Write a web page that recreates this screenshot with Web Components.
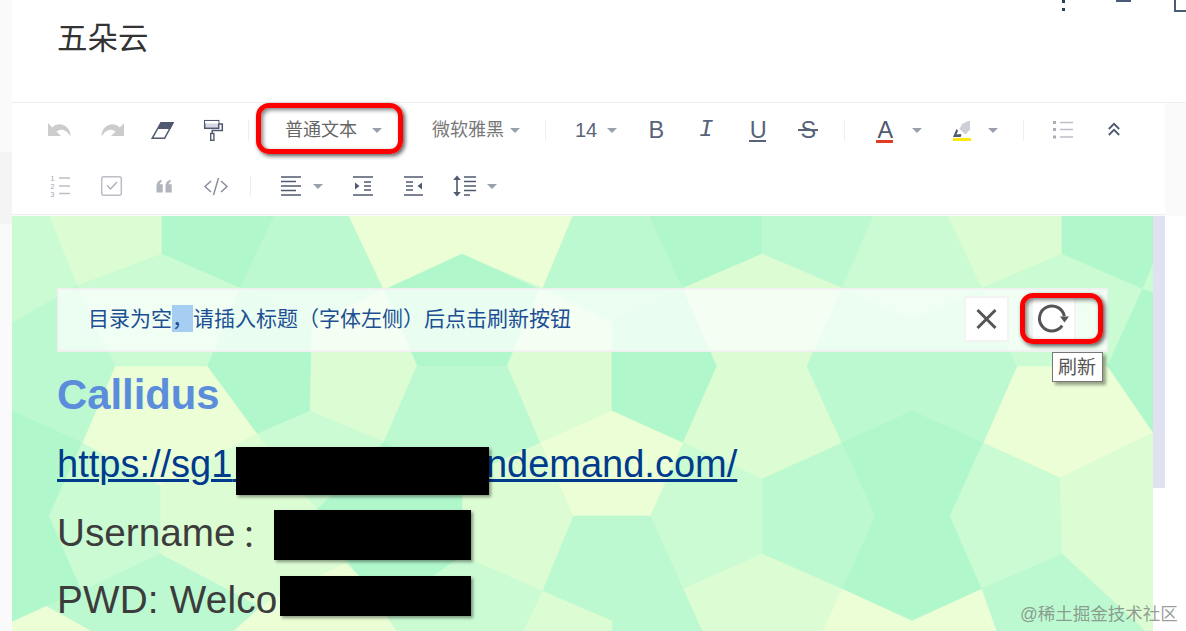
<!DOCTYPE html>
<html lang="zh">
<head>
<meta charset="utf-8">
<title>五朵云</title>
<style>
  html, body { margin: 0; height: 100%; overflow: hidden; background: #fff; }
  body { font-family: "Liberation Sans", "Noto Sans CJK SC", sans-serif; }
  a { color: inherit; text-decoration: inherit; }
</style>
</head>
<body>
<note-page>
  <title-bar>五朵云</title-bar>
  <editor-toolbar>
    <tool-row slot="row1">
      <tb-icon name="undo" w="52"></tb-icon>
      <tb-icon name="redo" w="52"></tb-icon>
      <tb-icon name="eraser" w="50"></tb-icon>
      <tb-icon name="roller" w="50"></tb-icon>
      <tb-sep style="margin-left:10px"></tb-sep>
      <tb-select style="margin-left:36px;--gap:15px;color:#666">普通文本</tb-select>
      <tb-select style="margin-left:50px;--gap:6px;color:#777">微软雅黑</tb-select>
      <tb-sep style="margin-left:25px"></tb-sep>
      <tb-select style="margin-left:29px;--gap:10px;--size:20px;color:#5a6478">14</tb-select>
      <tb-letter style="margin-left:14px">B</tb-letter>
      <tb-letter kind="italic">I</tb-letter>
      <tb-letter kind="under" style="margin-left:2px">U</tb-letter>
      <tb-letter kind="strike">S</tb-letter>
      <tb-sep style="margin-left:11px"></tb-sep>
      <tb-letter kind="color" style="margin-left:25px">A</tb-letter>
      <tb-caret style="margin-left:12px"></tb-caret>
      <tb-icon name="marker" w="30" style="margin-left:25px"></tb-icon>
      <tb-caret style="margin-left:11px"></tb-caret>
      <tb-sep style="margin-left:25px"></tb-sep>
      <tb-icon name="ul" w="30" style="margin-left:24px"></tb-icon>
      <tb-icon name="collapse" w="30" style="margin-left:21px"></tb-icon>
    </tool-row>
    <tool-row slot="row2">
      <tb-icon name="ol" w="52"></tb-icon>
      <tb-icon name="check" w="52"></tb-icon>
      <tb-icon name="quote" w="52"></tb-icon>
      <tb-icon name="code" w="52"></tb-icon>
      <tb-sep style="margin-left:8px"></tb-sep>
      <tb-icon name="alignleft" w="30" style="margin-left:25px"></tb-icon>
      <tb-caret style="margin-left:7px"></tb-caret>
      <tb-icon name="indent" w="30" style="margin-left:25px"></tb-icon>
      <tb-icon name="outdent" w="30" style="margin-left:21px"></tb-icon>
      <tb-icon name="lineheight" w="30" style="margin-left:20px"></tb-icon>
      <tb-caret style="margin-left:8px"></tb-caret>
    </tool-row>
    <annot-box slot="over" style="left:244px;top:0;width:147px;height:51px"></annot-box>
  </editor-toolbar>
  <doc-pane>
    <toc-notice>
      目录为空<span style="display:inline-block;height:27px;line-height:27px;background:#a6cdf2">，</span>请插入标题（字体左侧）后点击刷新按钮
      <notice-btn slot="actions" icon="close"></notice-btn>
      <notice-btn slot="actions" icon="refresh"></notice-btn>
    </toc-notice>
    <doc-heading>Callidus</doc-heading>
    <doc-line style="color:#003a8c;font-size:38px;margin-top:2px"><a href="#" style="text-decoration:underline;text-decoration-thickness:3px;text-underline-offset:2px">https://sg1<span style="letter-spacing:243px">&nbsp;</span>ndemand.com/</a></doc-line>
    <doc-line>Username<span style="font-size:30px;margin-left:6px">：</span></doc-line>
    <doc-line style="letter-spacing:.2px">PWD: Welco</doc-line>
    <redact-box style="left:224px;top:231px;width:253px;height:48px"></redact-box>
    <redact-box style="left:262px;top:294px;width:197px;height:50px"></redact-box>
    <redact-box style="left:268px;top:360px;width:191px;height:40px"></redact-box>
    <annot-box style="left:1008px;top:77px;width:83px;height:51px"></annot-box>
    <tip-box style="left:1040px;top:136px">刷新</tip-box>
  </doc-pane>
  <water-mark>@稀土掘金技术社区</water-mark>
</note-page>

<script>
const DARK = "#50596f";
const ICONS = {
  undo: `<path fill="#ccc" d="M2 7v13h13l-4.5-4.500c2.400-1.800 5-2.200 7.400-1.300 2.600 1 4.600 3 6.600 6 .2-4.500-2.200-9-6.800-11-4-1.700-8.400-.7-11.400 2.200z"/>`,
  redo: `<path fill="#ccc" transform="matrix(-1 0 0 1 28 0)" d="M2 7v13h13l-4.500-4.500c2.400-1.800 5-2.200 7.400-1.300 2.600 1 4.600 3 6.600 6 .2-4.500-2.200-9-6.800-11-4-1.700-8.400-.7-11.400 2.200z"/>`,
  eraser: `<path fill="${DARK}" d="M12 6h13l-3.600 7H8.400z"/><path fill="none" stroke="${DARK}" stroke-width="1.500" d="M12 6.700h12L15.600 22.300H3.200z"/>`,
  roller: `<rect x="5.700" y="4.700" width="14" height="7.600" fill="#d5d9e4" stroke="${DARK}" stroke-width="1.500"/><rect x="6" y="5" width="13.500" height="2.500" fill="#fff"/>
    <path fill="none" stroke="${DARK}" stroke-width="1.500" d="M20 8h3.300v6.500H13.200v3"/><rect x="11.700" y="17.500" width="3.200" height="6.800" fill="#fff" stroke="${DARK}" stroke-width="1.400"/>`,
  marker: `<path fill="#cdd0d6" d="M14 8l6-3h2v8.500l-4.500 5-6-5.500z"/><path fill="${DARK}" d="M5 21l3.500-8 1.500 1.500-1.500 4 4-.5 1 1-1 2z"/><rect x="5" y="22" width="18" height="3" fill="#fbe610"/>`,
  ul: `<g fill="#aaaeb9"><rect x="4" y="5" width="3" height="3"/><rect x="4" y="12" width="3" height="3"/><rect x="4" y="19.500" width="3" height="3"/></g>
    <g stroke="#bcbfc8" stroke-width="1.400"><path d="M11 6.500h13M11 13.500h13M11 21h13"/></g>`,
  collapse: `<path fill="none" stroke="${DARK}" stroke-width="1.800" d="M8.800 13l5.200-5.200 5.200 5.200M8.800 19l5.200-5.200 5.200 5.200"/>`,
  ol: `<g fill="#a0a4ae" font-size="7" font-family="Liberation Sans"><text x="4.500" y="8.500">1</text><text x="4.500" y="16.500">2</text><text x="4.500" y="24.500">3</text></g>
    <path stroke="#bcbfc8" stroke-width="1.300" d="M13 6h11M13 14h11M13 21.500h11"/>`,
  check: `<rect x="3.700" y="4.700" width="19.600" height="18.600" rx="2" fill="none" stroke="#bbbec6" stroke-width="1.500"/><path fill="none" stroke="#a8acb6" stroke-width="1.300" d="M9 13.500l3.500 3.500 6.500-7"/>`,
  quote: `<g fill="#b0b4bd"><path d="M6.500 14c0-3 1.600-5.200 5-6.500v2.400c-1.100.5-1.700 1.200-1.800 2.400h3V20.500H6.500z"/><path d="M15.500 14c0-3 1.600-5.200 5-6.500v2.400c-1.100.5-1.700 1.200-1.800 2.400h3V20.500h-6.200z"/></g>`,
  code: `<path fill="none" stroke="#85899a" stroke-width="1.400" d="M9 9l-6 5.500L9 20M19 9l6 5.500-6 5.500M16.500 6l-5 17"/>`,
  alignleft: `<path stroke="${DARK}" stroke-width="1.600" d="M4 5h20M4 9.500h15M4 14h20M4 18.500h15M4 23h20"/>`,
  indent: `<path stroke="${DARK}" stroke-width="1.600" d="M4 5h20M15 10h7M15 14h7M15 18h7M4 23h20"/><path fill="${DARK}" d="M6 10.500l4.500 3.500L6 17.500z"/>`,
  outdent: `<path stroke="${DARK}" stroke-width="1.600" d="M4 5h19M6 10h7M6 14h7M6 18h7M4 23h19"/><path fill="${DARK}" d="M22 10.500L17.500 14l4.500 3.500z"/>`,
  lineheight: `<path stroke="${DARK}" stroke-width="1.600" d="M7 6v16M14 5h12M14 9.500h12M14 14h12M14 18.500h12M14 23h6"/><path fill="${DARK}" d="M3.200 8L7 3.600 10.800 8zM3.200 20L7 24.400 10.800 20z"/>`,
};

class NotePage extends HTMLElement {
  constructor() {
    super();
    this.attachShadow({ mode: "open" });
    this.shadowRoot.innerHTML = `
      <style>
        :host { display: flex; width: 1186px; height: 631px; overflow: hidden; position: relative; }
        .strip { width: 12px; flex: none; display: flex; flex-direction: column; }
        .strip div { background: #fafafa; }
        .strip .a { height: 152px; }
        .strip .b { height: 72px; background: #f4f4f4; }
        .strip .c { flex: 1; }
        main { flex: 1; display: flex; flex-direction: column; min-width: 0; }
      </style>
      <div class="strip"><div class="a"></div><div class="b"></div><div class="c"></div></div>
      <main><slot></slot></main>
    `;
  }
}

class TitleBar extends HTMLElement {
  constructor() {
    super();
    this.attachShadow({ mode: "open" });
    this.shadowRoot.innerHTML = `
      <style>
        :host { display: block; height: 102px; border-bottom: 1px solid #eee; position: relative;
                background: #fff; color: #333; font: 30.5px/36px "Liberation Sans", "Noto Sans CJK SC", sans-serif; }
        .name { padding: 20px 0 0 45px; }
        .kebab { position: absolute; left: 1050px; top: 0; width: 3px; height: 3px; background: #2c3a5c; box-shadow: 0 8px 0 #2c3a5c; }
        .min { position: absolute; left: 1104px; top: 0; width: 15px; height: 2px; background: #4a5a78; }
        .max { position: absolute; left: 1162px; top: -2px; width: 20px; height: 10px; border: 2px solid #4a5a78; }
      </style>
      <div class="name"><slot></slot></div>
      <span class="kebab"></span><span class="min"></span><span class="max"></span>
    `;
  }
}

class EditorToolbar extends HTMLElement {
  constructor() {
    super();
    this.attachShadow({ mode: "open" });
    this.shadowRoot.innerHTML = `
      <style>
        :host { display: block; position: relative; height: 113px; background: #fafafa; }
        .bar { width: 1153px; height: 111px; background: #fff; border-bottom: 1px solid #eee; display: flex; flex-direction: column; gap: 2px; }
      </style>
      <div class="bar"><slot name="row1"></slot><slot name="row2"></slot></div>
      <slot name="over"></slot>
    `;
  }
}

class ToolRow extends HTMLElement {
  constructor() {
    super();
    this.attachShadow({ mode: "open" });
    this.shadowRoot.innerHTML = `
      <style>
        :host { display: flex; align-items: center; height: 54px; padding-left: 22px; }
      </style>
      <slot></slot>
    `;
  }
}

class TbIcon extends HTMLElement {
  constructor() {
    super();
    this.attachShadow({ mode: "open" });
  }
  connectedCallback() {
    const w = this.getAttribute("w") || 30;
    this.shadowRoot.innerHTML = `
      <style>
        :host { display: flex; flex: none; justify-content: center; align-items: center; height: 28px; width: ${w}px; }
        svg { display: block; }
      </style>
      <svg width="28" height="28" viewBox="0 0 28 28">${ICONS[this.getAttribute("name")]}</svg>
    `;
  }
}

class TbSep extends HTMLElement {
  constructor() {
    super();
    this.attachShadow({ mode: "open" });
    this.shadowRoot.innerHTML = `<style>:host { display: block; flex: none; width: 1px; height: 21px; background: #eee; }</style>`;
  }
}

class TbCaret extends HTMLElement {
  constructor() {
    super();
    this.attachShadow({ mode: "open" });
    this.shadowRoot.innerHTML = `
      <style>
        :host { display: block; flex: none; width: 0; height: 0; border: 5px solid transparent; border-bottom: 0; border-top: 5px solid #9a9fae; }
      </style>
    `;
  }
}

class TbSelect extends HTMLElement {
  constructor() {
    super();
    this.attachShadow({ mode: "open" });
    this.shadowRoot.innerHTML = `
      <style>
        :host { display: flex; flex: none; align-items: center; gap: var(--gap, 8px);
                font: var(--size, 18px)/28px "Liberation Sans", "Noto Sans CJK SC", sans-serif; }
      </style>
      <span><slot></slot></span><tb-caret></tb-caret>
    `;
  }
}

class TbLetter extends HTMLElement {
  constructor() {
    super();
    this.attachShadow({ mode: "open" });
  }
  connectedCallback() {
    const kind = this.getAttribute("kind") || "plain";
    this.shadowRoot.innerHTML = `
      <style>
        :host { display: flex; flex: none; justify-content: center; align-items: center; width: 50px; height: 28px; position: relative;
                color: #58627a; font: 23.5px/28px "Liberation Sans", sans-serif; }
        :host([kind="italic"]) { font: italic 24px/32px "Liberation Mono", monospace; }
        :host([kind="color"]) { width: 30px; color: ${DARK}; }
        .deco { position: absolute; }
        .under { left: 16px; width: 17px; top: 24px; height: 1.5px; background: #58627a; }
        .strike { left: 15px; width: 20px; top: 13px; height: 1.5px; background: #58627a; }
        .color { left: 6px; width: 17px; top: 24px; height: 3px; background: #e33a22; }
      </style>
      <slot></slot><span class="deco ${kind}"></span>
    `;
  }
}

class AnnotBox extends HTMLElement {
  constructor() {
    super();
    this.attachShadow({ mode: "open" });
    this.shadowRoot.innerHTML = `
      <style>
        :host { display: block; position: absolute; box-sizing: border-box; border: 5px solid #fe0000; border-radius: 13px;
                box-shadow: 2px 2px 4px rgba(0,0,0,.65), inset 2px 2px 4px rgba(0,0,0,.5); }
      </style>
    `;
  }
}

class DocPane extends HTMLElement {
  constructor() {
    super();
    this.attachShadow({ mode: "open" });
    this.shadowRoot.innerHTML = `
      <style>
        :host { display: flex; height: 415px; background: #fff; }
        .doc { position: relative; z-index: 0; width: 1141px; height: 415px; overflow: hidden; box-sizing: border-box; padding: 72px 45px 0; }
        .scroll { width: 12px; height: 272px; background: #e0e2f2; flex: none; }
        poly-bg { position: absolute; left: 0; top: 0; z-index: -1; }
      </style>
      <div class="doc"><poly-bg></poly-bg><slot></slot></div>
      <div class="scroll"></div>
    `;
  }
}

class PolyBg extends HTMLElement {
  constructor() {
    super();
    this.attachShadow({ mode: "open" });
    const A = "#b0f7cb", B = "#bcf9d0", C = "#cafbd2", D = "#dcfcd3", E = "#ebfed6";
    const cells = [
      [D, "37,0 150,0 150,38 65,70"],
      [A, "150,0 262,0 228,72 150,38"],
      [B, "262,0 337,0 372,74 300,108 228,72"],
      [E, "337,0 561,0 531,72 450,38 372,74"],
      [A, "372,74 450,38 528,74 495,150 405,150"],
      [B, "561,0 638,0 671,72 600,105 531,72"],
      [D, "528,74 600,108 600,195 528,227 495,150"],
      [A, "600,105 671,72 705,150 671,227 600,195"],
      [A, "638,0 750,0 750,38 671,72"],
      [B, "750,0 861,0 830,72 750,38"],
      [D, "671,72 750,38 830,72 795,150 830,227 750,263 671,227 705,150"],
      [C, "861,0 936,0 970,72 900,105 830,72"],
      [D, "936,0 1050,0 1050,38 970,72"],
      [A, "1050,0 1141,0 1141,47 1130,73 1050,38"],
      [A, "1130,73 1141,77 1141,217 1095,150"],
      [E, "1005,150 1095,150 1141,217 1048,262 971,227"],
      [B, "830,72 900,105 970,72 1005,150 971,227 900,195 830,227 795,150"],
      [C, "970,72 1050,38 1130,73 1095,150 1005,150"],
      [A, "900,195 971,227 938,300 970,373 900,405 830,373 863,300 830,227"],
      [B, "750,263 830,227 863,300 830,373 750,338"],
      [C, "671,227 750,263 750,338 671,373 638,300"],
      [E, "600,195 671,227 638,300 561,300 528,227"],
      [B, "561,300 638,300 671,373 600,405 530,375"],
      [D, "671,373 750,338 830,373 811,415 690,415"],
      [B, "600,405 671,373 690,415 600,415"],
      [D, "530,375 600,405 600,415 511,415"],
      [E, "830,373 900,405 970,373 985,415 811,415"],
      [C, "938,300 971,227 1048,262 1050,338 970,373"],
      [D, "1048,262 1141,217 1141,415 1133,415 1050,338"],
      [B, "970,373 1050,338 1133,415 985,415"],
      [A, "228,72 300,108 298,195 245,218 195,150"],
      [D, "300,108 372,74 405,150 372,226 298,195"],
      [B, "405,150 495,150 528,227 450,262 372,226"],
      [D, "450,262 528,227 561,300 530,375 450,340"],
      [C, "245,218 298,195 372,226 305,294 260,320 224,270"],
      [A, "372,226 450,262 450,340 400,375 346,360 320,320 305,294"],
      [E, "103,150 195,150 245,218 148,270 70,227"],
      [D, "148,270 245,218 305,294 333,347 248,391 148,338"],
      [E, "333,347 360,372 385,415 221,415 248,391"],
      [C, "400,375 450,340 530,375 511,415 385,415 346,360"],
      [C, "0,0 37,0 65,70 0,107"],
      [C, "65,70 150,38 228,72 195,150 103,150"],
      [B, "0,107 65,70 103,150 70,227 0,195"],
      [A, "0,195 70,227 37,300 70,375 35,390 0,406"],
      [C, "70,227 148,270 148,338 70,375 37,300"],
      [E, "0,406 35,390 80,415 0,415"],
      [B, "70,375 148,338 248,391 221,415 80,415 35,390"],
    ];
    const polys = cells.map(([f, p]) => `<polygon fill="${f}" stroke="${f}" stroke-width=".6" points="${p}"/>`).join("");
    this.shadowRoot.innerHTML = `
      <style>:host { display: block; } svg { display: block; }</style>
      <svg width="1141" height="415" viewBox="0 0 1141 415"><rect width="1141" height="415" fill="${C}"/>${polys}</svg>
    `;
  }
}

class TocNotice extends HTMLElement {
  constructor() {
    super();
    this.attachShadow({ mode: "open" });
    this.shadowRoot.innerHTML = `
      <style>
        :host { display: flex; align-items: center; justify-content: space-between; box-sizing: border-box; height: 64px; padding: 0 30px;
                background: rgba(255,255,255,.72); border: 2px solid rgba(240,240,240,.85); color: #1c4f94;
                font: 21px/27px "Liberation Sans", "Noto Sans CJK SC", sans-serif; }
        .txt { margin-top: -3px; margin-left: -1px; }
        .acts { display: flex; gap: 22px; margin-top: -2px; }
      </style>
      <div class="txt"><slot></slot></div>
      <div class="acts"><slot name="actions"></slot></div>
    `;
  }
}

class NoticeBtn extends HTMLElement {
  constructor() {
    super();
    this.attachShadow({ mode: "open" });
  }
  connectedCallback() {
    const close = `<path fill="none" stroke="#555" stroke-width="3" d="M5.500 5l18 18M23.500 5l-18 18"/>`;
    const refresh = `<path fill="none" stroke="#555" stroke-width="3" d="M23.200 20.700A12.500 12.500 0 1 1 25.300 11.300"/><path fill="#555" d="M21 11.500h9l-4.500 6z"/>`;
    this.shadowRoot.innerHTML = `
      <style>
        :host { display: flex; justify-content: center; align-items: center; box-sizing: border-box; width: 45px; height: 46px;
                background: #fff; border: 2px solid #f3f3f3; }
        svg { display: block; overflow: visible; }
      </style>
      <svg width="29" height="29" viewBox="0 0 29 29">${this.getAttribute("icon") === "close" ? close : refresh}</svg>
    `;
  }
}

class TipBox extends HTMLElement {
  constructor() {
    super();
    this.attachShadow({ mode: "open" });
    this.shadowRoot.innerHTML = `
      <style>
        :host { display: block; position: absolute; box-sizing: border-box; width: 51px; height: 30px; padding-left: 5px; background: #fff;
                border: 1px solid #777; box-shadow: 3px 3px 3px rgba(80,90,70,.55); color: #555;
                font: 19px/29px "Liberation Sans", "Noto Sans CJK SC", sans-serif; }
      </style>
      <slot></slot>
    `;
  }
}

class DocHeading extends HTMLElement {
  constructor() {
    super();
    this.attachShadow({ mode: "open" });
    this.shadowRoot.innerHTML = `
      <style>
        :host { display: block; margin-top: 9px; color: #5b8ddb; font: bold 41.8px/68px "Liberation Sans", "Noto Sans CJK SC", sans-serif; }
      </style>
      <slot></slot>
    `;
  }
}

class DocLine extends HTMLElement {
  constructor() {
    super();
    this.attachShadow({ mode: "open" });
    this.shadowRoot.innerHTML = `
      <style>
        :host { display: block; height: 67.5px; color: #3c3c3c; font: 38.7px/67.5px "Liberation Sans", "Noto Sans CJK SC", sans-serif; }
      </style>
      <slot></slot>
    `;
  }
}

class RedactBox extends HTMLElement {
  constructor() {
    super();
    this.attachShadow({ mode: "open" });
    this.shadowRoot.innerHTML = `
      <style>
        :host { display: block; position: absolute; background: #000; box-shadow: 2px 2px 3px rgba(0,0,0,.4); }
      </style>
    `;
  }
}

class WaterMark extends HTMLElement {
  constructor() {
    super();
    this.attachShadow({ mode: "open" });
    this.shadowRoot.innerHTML = `
      <style>
        :host { display: block; position: absolute; left: 1020px; top: 602px; white-space: nowrap; color: rgba(120,125,120,.75);
                font: 17.5px/24px "Liberation Sans", "Noto Sans CJK SC", sans-serif; }
      </style>
      <slot></slot>
    `;
  }
}

customElements.define("note-page", NotePage);
customElements.define("title-bar", TitleBar);
customElements.define("editor-toolbar", EditorToolbar);
customElements.define("tool-row", ToolRow);
customElements.define("tb-icon", TbIcon);
customElements.define("tb-sep", TbSep);
customElements.define("tb-caret", TbCaret);
customElements.define("tb-select", TbSelect);
customElements.define("tb-letter", TbLetter);
customElements.define("annot-box", AnnotBox);
customElements.define("doc-pane", DocPane);
customElements.define("poly-bg", PolyBg);
customElements.define("toc-notice", TocNotice);
customElements.define("notice-btn", NoticeBtn);
customElements.define("tip-box", TipBox);
customElements.define("doc-heading", DocHeading);
customElements.define("doc-line", DocLine);
customElements.define("redact-box", RedactBox);
customElements.define("water-mark", WaterMark);
</script>
</body>
</html>
